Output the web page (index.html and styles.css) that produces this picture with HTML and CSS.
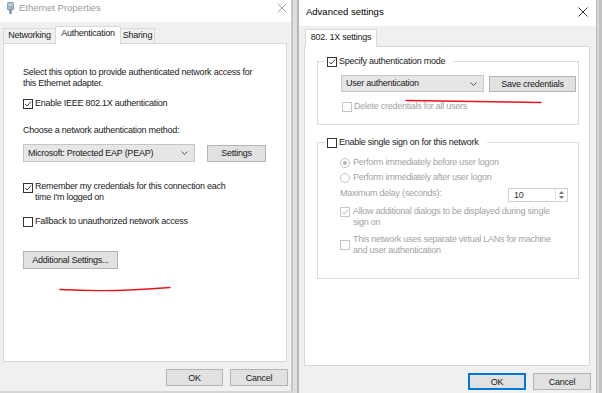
FILE: index.html
```html
<!DOCTYPE html>
<html lang="en">
<head>
    <meta charset="UTF-8">
    <meta name="viewport" content="width=device-width, initial-scale=1.0">
    <title>Ethernet Properties - Advanced settings</title>
    <link rel="stylesheet" href="styles.css">
</head>
<body>

<!-- Ethernet Properties (inactive window) -->
<div class="win win-left">
    <div class="titlebar">
        <svg class="app-icon" width="7" height="12" viewBox="0 0 7 12">
            <rect x="0.5" y="0.5" width="6" height="7.5" rx="1" fill="#9db3c9" stroke="#7892ad" stroke-width="0.8"/>
            <rect x="1.6" y="1.6" width="0.7" height="2.2" fill="#eef3f8"/>
            <rect x="3.1" y="1.6" width="0.7" height="2.2" fill="#eef3f8"/>
            <rect x="4.6" y="1.6" width="0.7" height="2.2" fill="#eef3f8"/>
            <rect x="2.4" y="8" width="2.2" height="4" fill="#6f8aa6"/>
        </svg>
        <span class="title">Ethernet Properties</span>
        <svg class="close" width="10" height="10" viewBox="0 0 10 10">
            <path d="M0.5 0.5 L9.5 9.5 M9.5 0.5 L0.5 9.5" stroke="#a3a3a3" stroke-width="1"/>
        </svg>
    </div>

    <div class="tabs">
        <span class="tab tab-net">Networking</span>
        <span class="tab tab-auth active">Authentication</span>
        <span class="tab tab-share">Sharing</span>
    </div>

    <div class="panel panel-left">
        <p class="intro">Select this option to provide authenticated network access for this Ethernet adapter.</p>

        <div class="check row-enable">
            <span class="box">
                <svg width="8" height="8" viewBox="0 0 10 10"><path d="M1.5 5 L4 7.5 L8.8 2" fill="none" stroke="#333" stroke-width="1.2"/></svg>
            </span>
            <span>Enable IEEE 802.1X authentication</span>
        </div>

        <p class="label-method">Choose a network authentication method:</p>
        <div class="combo-row">
            <div class="combo combo-method">
                <span>Microsoft: Protected EAP (PEAP)</span>
                <svg width="7" height="4" viewBox="0 0 7 4"><path d="M0.5 0.5 L3.5 3.5 L6.5 0.5" fill="none" stroke="#555" stroke-width="1"/></svg>
            </div>
            <button class="btn btn-settings">Settings</button>
        </div>

        <div class="check row-remember">
            <span class="box">
                <svg width="8" height="8" viewBox="0 0 10 10"><path d="M1.5 5 L4 7.5 L8.8 2" fill="none" stroke="#333" stroke-width="1.2"/></svg>
            </span>
            <span class="wrap">Remember my credentials for this connection each time I'm logged on</span>
        </div>

        <div class="check row-fallback">
            <span class="box"></span>
            <span>Fallback to unauthorized network access</span>
        </div>

        <button class="btn btn-additional">Additional Settings...</button>
    </div>

    <div class="footer">
        <button class="btn btn-ok">OK</button>
        <button class="btn btn-cancel">Cancel</button>
    </div>
</div>

<div class="gap"></div>

<!-- Advanced settings (active window) -->
<div class="win win-right">
    <div class="titlebar">
        <span class="title">Advanced settings</span>
        <svg class="close" width="10" height="10" viewBox="0 0 10 10">
            <path d="M0.5 0.5 L9.5 9.5 M9.5 0.5 L0.5 9.5" stroke="#333" stroke-width="1"/>
        </svg>
    </div>

    <div class="tabs">
        <span class="tab tab-8021x active">802. 1X settings</span>
    </div>

    <div class="panel panel-right">
        <fieldset class="group group-mode">
            <legend class="check">
                <span class="box">
                    <svg width="8" height="8" viewBox="0 0 10 10"><path d="M1.5 5 L4 7.5 L8.8 2" fill="none" stroke="#333" stroke-width="1.2"/></svg>
                </span>
                <span>Specify authentication mode</span>
            </legend>
            <div class="group-body">
                <div class="combo-row">
                    <div class="combo combo-mode">
                        <span>User authentication</span>
                        <svg width="7" height="4" viewBox="0 0 7 4"><path d="M0.5 0.5 L3.5 3.5 L6.5 0.5" fill="none" stroke="#555" stroke-width="1"/></svg>
                    </div>
                    <button class="btn btn-save">Save credentials</button>
                </div>
                <div class="check disabled row-delete">
                    <span class="box"></span>
                    <span>Delete credentials for all users</span>
                </div>
            </div>
        </fieldset>

        <fieldset class="group group-sso">
            <legend class="check">
                <span class="box"></span>
                <span>Enable single sign on for this network</span>
            </legend>
            <div class="group-body">
                <div class="check disabled row-before">
                    <span class="radio on"></span>
                    <span>Perform immediately before user logon</span>
                </div>
                <div class="check disabled row-after">
                    <span class="radio"></span>
                    <span>Perform immediately after user logon</span>
                </div>
                <div class="delay-row">
                    <span class="muted">Maximum delay (seconds):</span>
                    <div class="spin">
                        <span class="spin-value">10</span>
                        <span class="spin-arrows">
                            <svg width="5" height="3" viewBox="0 0 5 3"><path d="M0 3 L2.5 0 L5 3 Z" fill="#777"/></svg>
                            <svg width="5" height="3" viewBox="0 0 5 3"><path d="M0 0 L2.5 3 L5 0 Z" fill="#777"/></svg>
                        </span>
                    </div>
                </div>
                <div class="check disabled row-dialogs">
                    <span class="box">
                        <svg width="8" height="8" viewBox="0 0 10 10"><path d="M1.5 5 L4 7.5 L8.8 2" fill="none" stroke="#b5b5b5" stroke-width="1.2"/></svg>
                    </span>
                    <span class="wrap">Allow additional dialogs to be displayed during single sign on</span>
                </div>
                <div class="check disabled row-vlan">
                    <span class="box"></span>
                    <span class="wrap">This network uses separate virtual LANs for machine and user authentication</span>
                </div>
            </div>
        </fieldset>
    </div>

    <div class="footer">
        <button class="btn btn-ok default">OK</button>
        <button class="btn btn-cancel">Cancel</button>
    </div>
</div>

<div class="edge"></div>

<!-- red pen marks drawn over the screenshot -->
<svg class="ink" width="602" height="393" viewBox="0 0 602 393">
    <path d="M60 289.5 Q 112 292.5 170 287.5" fill="none" stroke="#e8141b" stroke-width="1.4" stroke-linecap="round"/>
    <path d="M406 100.5 L541 102.5" fill="none" stroke="#e8141b" stroke-width="1.4" stroke-linecap="round"/>
</svg>

</body>
</html>
```

FILE: styles.css
```css
/* Global */
* {
    box-sizing: border-box;
}

body {
    margin: 0;
    width: 602px;
    height: 393px;
    overflow: hidden;
    position: relative;
    display: flex;
    align-items: flex-start;
    background-color: #d6d6d6;
    font-family: "Liberation Sans", Arial, sans-serif;
    font-size: 9px;
    line-height: 11px;
    letter-spacing: -0.25px;
    color: #1a1a1a;
}

p {
    margin: 0;
}

/* Windows */
.win {
    background-color: #f0f0f0;
    display: flex;
    flex-direction: column;
}

.win-left {
    width: 293px;
    height: 391px;
    border-right: 2px solid #c6c6c6;
}

.gap {
    width: 4px;
    height: 393px;
    background-color: #dedede;
}

.win-right {
    width: 300px;
    height: 393px;
    border-left: 2px solid #b7b7b7;
    border-right: 1px solid #bdbdbd;
}

.edge {
    flex: 1;
    height: 393px;
    background-color: #c2c2c2;
    border-left: 2px solid #d4d4d4;
}

/* Title bar */
.titlebar {
    background-color: #fff;
    display: flex;
    align-items: flex-start;
}

.win-left .titlebar {
    height: 22px;
    padding: 2px 0 0 7px;
}

.win-right .titlebar {
    height: 26px;
    padding: 6px 0 0 7px;
}

.title {
    font-size: 9.5px;
    line-height: 12px;
    letter-spacing: 0;
}

.win-left .title {
    color: #9a9a9a;
    margin-left: 5px;
}

.win-right .title {
    color: #000;
}

.close {
    margin-left: auto;
}

.win-left .close {
    margin-top: 1px;
    margin-right: 4px;
}

.win-right .close {
    margin-top: 1px;
    margin-right: 8px;
}

/* Tabs */
.tabs {
    display: flex;
    align-items: flex-end;
}

.win-left .tabs {
    margin-top: 4px;
    padding-left: 3px;
}

.win-right .tabs {
    margin-top: 3px;
    padding-left: 6px;
}

.tab {
    height: 15px;
    padding-top: 1px;
    text-align: center;
    background-color: #f0f0f0;
    border: 1px solid #d9d9d9;
    border-bottom: none;
}

.tab.active {
    position: relative;
    z-index: 1;
    height: 18px;
    margin-bottom: -1px;
    background-color: #fff;
}

.tab-net { width: 52px; border-right: none; }
.tab-auth { width: 66px; }
.tab-share { width: 34px; border-left: none; }
.tab-8021x { width: 72px; height: 17px; padding-top: 2px; }

/* Panels */
.panel {
    background-color: #fff;
    border: 1px solid #d9d9d9;
}

.panel-left {
    margin-left: 3px;
    width: 284px;
    height: 319px;
    padding: 23px 20px 0 19px;
}

.panel-right {
    margin-left: 5px;
    width: 286px;
    height: 320px;
    padding-top: 9px;
}

.intro {
    line-height: 10.5px;
}

/* Checkboxes and radios */
.check {
    display: flex;
    align-items: center;
}

.box {
    width: 10px;
    height: 10px;
    flex: none;
    margin-right: 2px;
    border: 1px solid #333;
    background-color: #fff;
    display: flex;
    align-items: center;
    justify-content: center;
}

.radio {
    width: 10px;
    height: 10px;
    flex: none;
    margin-right: 3px;
    border: 1px solid #c2c2c2;
    border-radius: 50%;
    display: flex;
    align-items: center;
    justify-content: center;
}

.radio.on::after {
    content: "";
    width: 4px;
    height: 4px;
    border-radius: 50%;
    background-color: #b3b3b3;
}

.disabled,
.muted {
    color: #a3a3a3;
}

.disabled .box {
    border-color: #c6c6c6;
}

.wrap {
    max-width: 200px;
}

/* Combos and buttons */
.combo-row {
    display: flex;
    align-items: center;
}

.combo {
    display: flex;
    align-items: center;
    justify-content: space-between;
    padding: 0 6px 0 4px;
    background-color: #e6e6e6;
    border: 1px solid #c6c6c6;
}

.btn {
    font-family: inherit;
    font-size: 9px;
    letter-spacing: -0.25px;
    color: #1a1a1a;
    padding: 0;
    background-color: #e1e1e1;
    border: 1px solid #b4b4b4;
}

/* Left sheet rows */
.row-enable {
    margin-top: 10px;
}

.label-method {
    margin-top: 16px;
}

.panel-left .combo-row {
    margin-top: 8px;
}

.combo-method {
    width: 177px;
    height: 18px;
}

.btn-settings {
    width: 61px;
    height: 17px;
    margin-left: 12px;
}

.row-remember {
    margin-top: 19px;
    align-items: flex-start;
}

.row-remember .box {
    margin-top: 2px;
}

.row-fallback {
    margin-top: 13px;
}

.btn-additional {
    display: block;
    margin-top: 24px;
    width: 95px;
    height: 18px;
}

/* Footers */
.footer {
    display: flex;
    justify-content: flex-end;
    gap: 7px;
}

.win-left .footer {
    margin-top: 7px;
    padding-right: 3px;
}

.win-left .btn-ok { width: 57px; height: 17px; }
.win-left .btn-cancel { width: 58px; height: 17px; }

.win-right .footer {
    margin-top: 7px;
    padding-right: 5px;
}

.win-right .btn-ok,
.win-right .btn-cancel {
    width: 58px;
    height: 17px;
}

.btn.default {
    border-color: #0078d7;
    box-shadow: inset 0 0 0 1px #0078d7;
}

/* Group boxes */
.group {
    margin: 0 10px 0 12px;
    padding: 0;
    border: 1px solid #dcdcdc;
    min-width: 0;
}

.group legend {
    margin-left: 7px;
    padding: 0 8px 0 2px;
}

.group-mode .group-body {
    padding: 0 2px 12px 23px;
}

.group-sso {
    margin-top: 12px;
}

.group-sso .group-body {
    padding: 0 10px 22px 22px;
}

.group-mode .combo-row {
    margin-top: 8px;
}

.combo-mode {
    width: 143px;
    height: 17px;
}

.btn-save {
    width: 87px;
    height: 16px;
    margin-left: 5px;
}

.row-delete {
    margin-top: 9px;
    padding-left: 1px;
}

.row-before {
    margin-top: 9px;
}

.row-after {
    margin-top: 4px;
}

.delay-row {
    margin-top: 5px;
    display: flex;
    justify-content: space-between;
    align-items: flex-start;
}

.spin {
    width: 60px;
    height: 14px;
    display: flex;
    align-items: center;
    justify-content: space-between;
    background-color: #fff;
    border: 1px solid #cfcfcf;
}

.spin-value {
    padding-left: 5px;
    color: #333;
}

.spin-arrows {
    width: 12px;
    height: 12px;
    display: flex;
    flex-direction: column;
    align-items: center;
    justify-content: center;
    gap: 2px;
    border-left: 1px solid #e2e2e2;
}

.spin-arrows svg {
    display: block;
}

.row-dialogs {
    margin-top: 4px;
    align-items: flex-start;
}

.row-dialogs .box {
    margin-top: 1px;
}

.row-vlan {
    margin-top: 6px;
}

.row-dialogs .box,
.row-vlan .box {
    margin-right: 3px;
}

/* Pen marks */
.ink {
    position: absolute;
    top: 0;
    left: 0;
    pointer-events: none;
}
```
